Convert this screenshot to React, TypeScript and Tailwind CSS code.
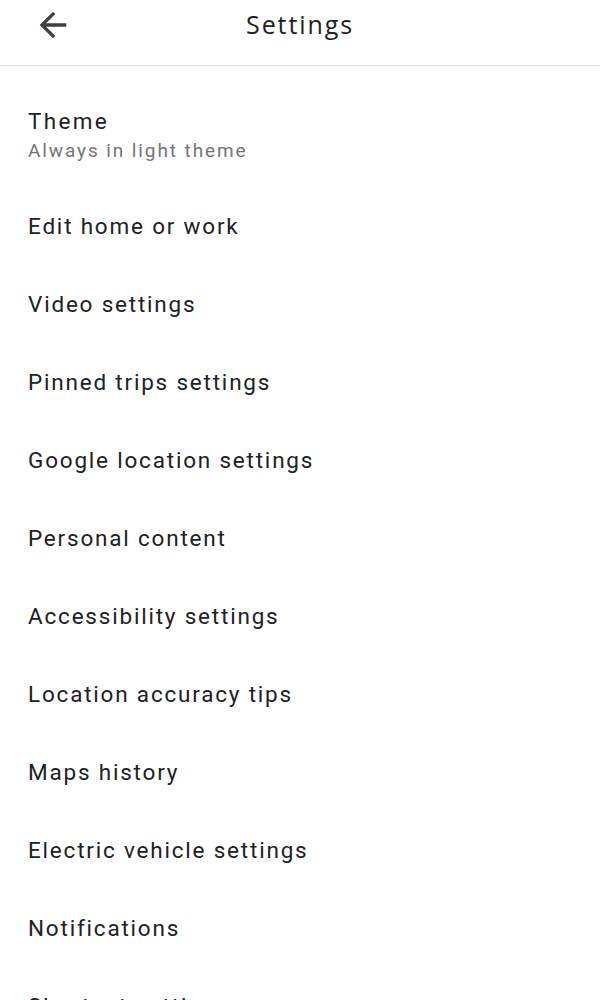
const items = [
  'Edit home or work',
  'Video settings',
  'Pinned trips settings',
  'Google location settings',
  'Personal content',
  'Accessibility settings',
  'Location accuracy tips',
  'Maps history',
  'Electric vehicle settings',
  'Notifications',
  'Shortcut settings',
];

export default function App() {
  return (
    <div className="h-[1000px] overflow-hidden bg-white font-['Roboto',sans-serif] text-[#202124]">
      <header className="relative flex h-[66px] items-center justify-center border-b border-[#e3e3e3] shadow-[0_1px_2px_rgba(0,0,0,0.06)]">
        <button className="absolute left-[33px] top-[5px] text-[#3c4043]">
          <svg width="40" height="40" viewBox="0 0 24 24" fill="currentColor">
            <path d="M20 11H7.83l5.59-5.59L12 4l-8 8 8 8 1.41-1.41L7.83 13H20v-2z" />
          </svg>
        </button>
        <h1 className="-mt-[16px] text-[25px] font-['Open_Sans',sans-serif] tracking-[1.9px]">Settings</h1>
      </header>
      <ul>
        <li className="px-[28px] pt-[40px] pb-[22px]">
          <p className="text-[22.5px] leading-[30px] tracking-[2.3px]">Theme</p>
          <p className="text-[19px] leading-[30px] tracking-[1.9px] text-[#757575]">Always in light theme</p>
        </li>
        {items.map((item) => (
          <li key={item} className="flex h-[78px] items-center px-[28px] text-[22.5px] tracking-[1.8px]">
            {item}
          </li>
        ))}
      </ul>
    </div>
  );
}
